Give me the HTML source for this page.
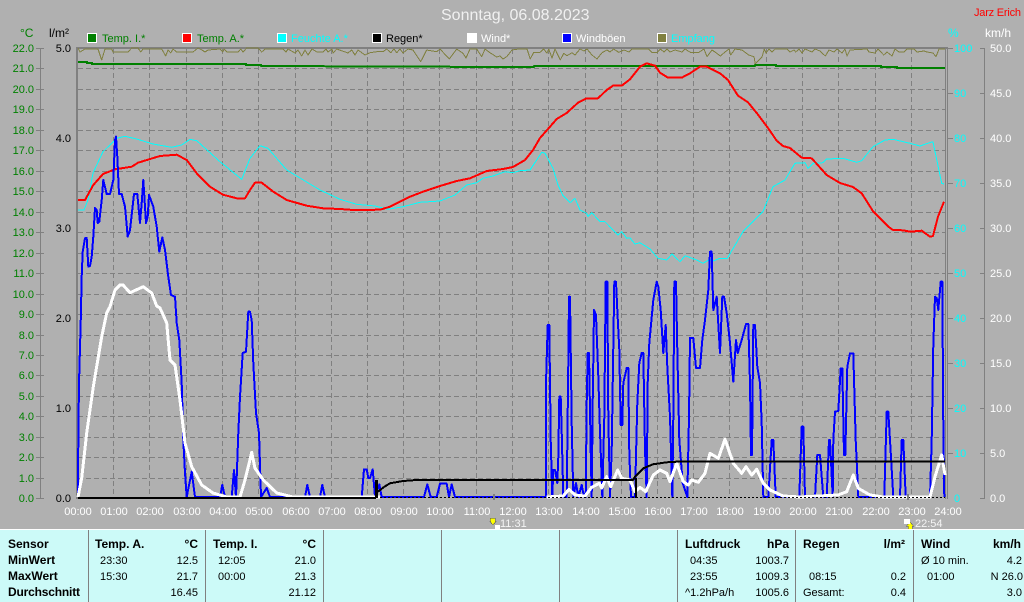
<!DOCTYPE html>
<html><head><meta charset="utf-8"><title>Sonntag, 06.08.2023</title>
<style>
html,body{margin:0;padding:0;background:#b0b0b0}
svg{display:block}
text{font-family:"Liberation Sans",sans-serif;font-size:11px}
.b{font-weight:bold;font-size:12px}
.g{fill:#008000}.w{fill:#fff}.c{fill:#0ff}.k{fill:#000}
.e{text-anchor:end}.m{text-anchor:middle}
polyline,path,line,rect{shape-rendering:crispEdges}
polyline{fill:none;stroke-linejoin:round}
</style></head><body>
<svg width="1024" height="602" viewBox="0 0 1024 602" xmlns="http://www.w3.org/2000/svg">
<rect width="1024" height="602" fill="#b0b0b0"/>
<text x="441" y="20" style="font-size:16px" fill="#f0f0f0">Sonntag, 06.08.2023</text>
<text x="974" y="16" fill="#f00" textLength="47">Jarz Erich</text>
<text x="20" y="37" class="g" style="font-size:12px">°C</text>
<text x="49" y="37" class="k" style="font-size:12px">l/m²</text>
<text x="948" y="37" class="c" style="font-size:12px">%</text>
<text x="985" y="37" class="w" style="font-size:12px">km/h</text>

<!-- legend -->
<g stroke="#fff" stroke-width="1">
<rect x="87.5" y="33.5" width="9" height="9" fill="#008000"/>
<rect x="182.5" y="33.5" width="9" height="9" fill="#f00"/>
<rect x="277.5" y="33.5" width="9" height="9" fill="#0ff"/>
<rect x="372.5" y="33.5" width="9" height="9" fill="#000"/>
<rect x="467.5" y="33.5" width="9" height="9" fill="#fff"/>
<rect x="562.5" y="33.5" width="9" height="9" fill="#00f"/>
<rect x="657.5" y="33.5" width="9" height="9" fill="#808040"/>
</g>
<text x="102" y="42" class="g">Temp. I.*</text>
<text x="197" y="42" class="g">Temp. A.*</text>
<text x="291" y="42" class="c">Feuchte A.*</text>
<text x="386" y="42" class="k">Regen*</text>
<text x="481" y="42" class="w">Wind*</text>
<text x="576" y="42" class="w">Windböen</text>
<text x="671" y="42" class="c">Empfang</text>

<!-- grid -->
<path stroke="#808080" stroke-width="1" stroke-dasharray="5 3" fill="none" d="M78 68.5H945M78 89.5H945M78 109.5H945M78 130.5H945M78 150.5H945M78 171.5H945M78 191.5H945M78 212.5H945M78 232.5H945M78 253.5H945M78 273.5H945M78 294.5H945M78 314.5H945M78 335.5H945M78 355.5H945M78 375.5H945M78 396.5H945M78 416.5H945M78 437.5H945M78 457.5H945M78 478.5H945"/>
<path stroke="#808080" stroke-width="1" stroke-dasharray="5 3" fill="none" d="M113.5 49V498M149.5 49V498M186.5 49V498M222.5 49V498M258.5 49V498M295.5 49V498M331.5 49V498M367.5 49V498M403.5 49V498M439.5 49V498M476.5 49V498M512.5 49V498M548.5 49V498M585.5 49V498M621.5 49V498M657.5 49V498M693.5 49V498M729.5 49V498M766.5 49V498M802.5 49V498M838.5 49V498M875.5 49V498M911.5 49V498"/>

<!-- frame -->
<rect x="76" y="47" width="872" height="2" fill="#808080"/>
<rect x="76" y="47" width="2" height="452" fill="#808080"/>
<rect x="945" y="47" width="1" height="452" fill="#808080"/>
<rect x="947" y="47" width="1" height="452" fill="#808080"/>

<!-- left axis -->
<path stroke="#808080" fill="none" d="M40.5 48V498M36 48.5H44M36 68.5H44M36 89.5H44M36 109.5H44M36 130.5H44M36 150.5H44M36 171.5H44M36 191.5H44M36 212.5H44M36 232.5H44M36 253.5H44M36 273.5H44M36 294.5H44M36 314.5H44M36 335.5H44M36 355.5H44M36 375.5H44M36 396.5H44M36 416.5H44M36 437.5H44M36 457.5H44M36 478.5H44M36 498.5H44"/>
<g class="e">
<text x="34" y="52" class="g e">22.0</text><text x="34" y="72" class="g e">21.0</text><text x="34" y="93" class="g e">20.0</text><text x="34" y="113" class="g e">19.0</text><text x="34" y="134" class="g e">18.0</text><text x="34" y="154" class="g e">17.0</text><text x="34" y="175" class="g e">16.0</text><text x="34" y="195" class="g e">15.0</text><text x="34" y="216" class="g e">14.0</text><text x="34" y="236" class="g e">13.0</text><text x="34" y="257" class="g e">12.0</text><text x="34" y="277" class="g e">11.0</text><text x="34" y="298" class="g e">10.0</text><text x="34" y="318" class="g e">9.0</text><text x="34" y="339" class="g e">8.0</text><text x="34" y="359" class="g e">7.0</text><text x="34" y="379" class="g e">6.0</text><text x="34" y="400" class="g e">5.0</text><text x="34" y="420" class="g e">4.0</text><text x="34" y="441" class="g e">3.0</text><text x="34" y="461" class="g e">2.0</text><text x="34" y="482" class="g e">1.0</text><text x="34" y="502" class="g e">0.0</text>
<text x="71" y="52" class="k e">5.0</text><text x="71" y="142" class="k e">4.0</text><text x="71" y="232" class="k e">3.0</text><text x="71" y="322" class="k e">2.0</text><text x="71" y="412" class="k e">1.0</text><text x="71" y="502" class="k e">0.0</text>
</g>

<!-- right axes -->
<path stroke="#808080" fill="none" d="M984.5 48V498M980 48.5H985M980 93.5H985M980 138.5H985M980 183.5H985M980 228.5H985M980 273.5H985M980 318.5H985M980 363.5H985M980 408.5H985M980 453.5H985M980 498.5H985M948 48.5H953M948 93.5H953M948 138.5H953M948 183.5H953M948 228.5H953M948 273.5H953M948 318.5H953M948 363.5H953M948 408.5H953M948 453.5H953"/>
<text x="954" y="52" class="c">100</text><text x="954" y="97" class="c">90</text><text x="954" y="142" class="c">80</text><text x="954" y="187" class="c">70</text><text x="954" y="232" class="c">60</text><text x="954" y="277" class="c">50</text><text x="954" y="322" class="c">40</text><text x="954" y="367" class="c">30</text><text x="954" y="412" class="c">20</text><text x="954" y="457" class="c">10</text><text x="954" y="502" class="c">0</text>
<text x="990" y="52" class="w">50.0</text><text x="990" y="97" class="w">45.0</text><text x="990" y="142" class="w">40.0</text><text x="990" y="187" class="w">35.0</text><text x="990" y="232" class="w">30.0</text><text x="990" y="277" class="w">25.0</text><text x="990" y="322" class="w">20.0</text><text x="990" y="367" class="w">15.0</text><text x="990" y="412" class="w">10.0</text><text x="990" y="457" class="w">5.0</text><text x="990" y="502" class="w">0.0</text>

<!-- olive -->
<polyline stroke="#808040" stroke-width="1" points="78,48 80,52 85,49 98,49 101.7,60 105,49 111.7,49 113,52 128,52 131.7,48 138,48 140.7,52 143,49 161.7,49 165.7,56 168,50 170.7,53 173,49 176.7,52 193,52 198,48 202,50 205,52 208,50 220,49 222.7,52 224,49 227,52 238,52 240.7,49 243,52 246.7,48 258,48 261.7,52 265,49 283,49 286,52 288,49 295,53 298,50 301.7,56 305,50 308,55 312,49 317,52 323,52 326,49 328,52 332,49 333,53 336.7,49 348,53 351.7,50 355,55 358,50 365,55 370,52.7 376.7,51.7 383,51.7 386.7,49 390.7,52.7 394,49 396.7,52.7 400,49 403,53 408,49 413,50 420.7,61.7 426.7,50 436.7,51.7 440,49 449.3,59 456.7,49 463,53.3 466,58 470,49 476.7,49 481.7,56.7 485,49 490,52.7 496.7,57 500,56 503,59 506.7,56.7 512,50 518.7,49 527,49 530.3,59 533.7,52.3 540,52.3 543.7,49 547,53.3 548.7,49 552,58 555,49 560.3,60 563.7,53.3 567,55.7 572,52.7 575,55 580,49 584,51 587,49 592,55 597,59 602,52.7 607,50 610,52 613.7,49 618.7,52.3 624,50 629,52 632,49 648.7,49 652,52.7 657,52.7 660.3,49 664,52 667,49 670,52 675,50 682,52 685,49 690.3,52.3 699,52.3 704,49 707,56.7 712,50 715,52 720.3,56 725,52 729,49 730.7,55 735,49 742,50 748.7,55 754,56.7 755.3,64 759,60 762,57 764.3,49 766,53 769,49 772,52 775.3,49 787,49 790,52 794,50 795.7,52 799,49 802,53 805,49 812,52 815,49 820,51 825.3,56 829,50 834,52 837,49 842,53 845,49 847,56 850,50 867,49 869,52 875,53 878,49 883.7,55 887,52 892,56 895,49 899,52 904,52 907,49 914,49 917,52 924,51 927,52 933,53 936,56.7 939,49 945,49"/>
<!-- green -->
<polyline stroke="#008000" stroke-width="2" stroke-linejoin="miter" points="78,62 87,62 87,63 92,63 92,64 246,64 246,65 261,65 261,66 512,67 534,67 534,66 755,66 755,65 776,65 776,66 881,66 881,67 897,67 897,68 945,68"/>
<!-- cyan -->
<polyline stroke="#0ff" stroke-width="1" points="78,210 84,210 88,200 93,173 103,151.7 116.7,138.3 125,136.3 136.7,139 153,144 171.7,147.3 181.7,145 190,139.3 196.7,140.7 220,161.7 241.7,179.3 250,158.3 260,145.7 268,148.3 286.7,170 320,190 340,199.3 356.7,204.3 375,206 380,207.3 388,209.3 403,206.7 420,202.3 440,201 455,195 466.7,185 476.7,182.7 483,178.3 493,176 505,171.7 513,172.7 520,170.7 530,170 536.7,160 541.7,152.3 545,153.3 553,168.3 558,185 563,195.7 570,202.7 575,198.3 580,210 586.7,213.3 588,216.7 591.7,212.7 600,221.7 605,221.7 618,235 621.7,231.7 626.7,238.3 630,238 635,244 640,242.7 650,249 658,258.3 666.7,260 672,254 680,261.7 685,255.7 696.7,260 703,263.3 710,259.3 713,261 720,258.3 727.3,258.3 743,231.7 763,211.7 773,186.7 785,180 795,163.3 805,162.7 808,168.3 813,163.3 823,162.7 826.7,159 843,158.3 856.7,162.3 861.7,160.7 873,146.7 885,140 893,139.3 910,143.3 920,146 931.7,142 933,142 941.7,183.3 944,184"/>
<!-- red -->
<polyline stroke="#f00" stroke-width="2" points="78,200 85,200 93.3,185 103,174 115,169.3 131.7,166.7 138,162.7 160,156 176.7,154.7 186.7,160 196.7,173.3 210,186.7 223,194.7 236.7,198.3 245,198.3 250,190 255,182.7 261.7,182.7 273.3,191.7 286.7,200 306.7,205.7 323,208.3 340,209 353,210 380,209.7 390,206.7 398,202.7 410,196.7 423,191.7 440,186 456.7,181 470,178.3 486.7,171 503,169 513,167 525,160 533,150 540,138 550,126.7 556.7,119 566.7,113 578,102.7 586.7,98.3 598,98.3 606.7,90 613,85.7 621.7,85.7 630,79.3 640,66.7 646.7,63.3 655,65.7 660,72.7 668,77.7 681.7,77.7 690,73.3 700,66.7 706.7,66.7 720,73.3 728,80 738,95.7 748,102.3 756.7,113 768,128 776.7,140.7 783,146 790,148 801.7,157.7 811.7,158.3 826.7,175 840,183 853,187 861.7,193.3 873.3,211.7 888.3,226.7 893,230 903,230.3 910,231.7 921.7,230.7 930,236.7 933,236 938,216.7 944,201.7"/>
<!-- blue -->
<polyline stroke="#00f" stroke-width="2" points="78,497 78.3,440 79,383 80.7,323 81.7,276.7 82.7,251.7 85,238.3 86.7,238 88.3,266.7 90,266 91.7,256.7 93.3,236.7 95,208 96.7,210 97.7,223 99.3,221.7 101.7,200 103.3,180 106.7,194 110,194 113.3,180 115,140 116,136.7 117.3,156.7 119,194 121.7,194 125,206.7 127.7,236.7 130,230 134,194 137.3,194 140,223 141.7,203 143.3,180 146,223 147.7,216.7 149,195 153.3,206.7 156.7,226.7 159.3,251.7 162.3,237.3 165,250 168.3,276.7 171,295 175,296.7 176.7,323 179.3,340 181.7,383 183.3,440 185,473 186.7,497 191.7,471.7 195,497 220,497 222.3,485 225,497 231.7,497 234,470 236,497 238.3,433 240,396.7 242.7,353 246,351.7 248.3,311.7 250,311.7 251.7,320 253.3,363 256,413 259,433 261,497 266.7,488 270,497 305,497 307.3,485 310,497 320,497 322.3,485 325,497 361.7,497 364,469.3 366.7,469.3 368.3,478 370,478 372.7,469.3 375,497 379.3,484.3 381.7,497 424,497 427.3,484.3 430.7,497 436.7,497 440,483.7 446.7,483.7 449,497 451.7,484.3 455,497 546,497 546,383 547.7,325 549.3,325 550.7,440 552.3,497 553.3,470 555,470 557.3,483 558.3,456.7 559.3,396.7 560.7,396.7 561.7,431.7 563.3,497 566.7,497 568.3,363 569,296.7 570,296.7 571.7,423 573.3,497 576,483 578.3,497 581.7,485 584,497 585.7,497 586.7,403 587.7,353 589,353 590.7,450 591.7,497 592.7,403 594,310 596,315 598.3,376.7 600,431.7 602.3,497 604.3,416.7 605.7,281.7 607.3,281.7 608.3,416.7 610,497 611.7,450 614.3,281.7 616,281.7 617.3,310 619.3,350 620.7,425 622.3,425 623.3,383 626.7,368 628.3,368 629.3,453 631,497 635,497 637.3,403 639.3,363 641.7,353 643.3,353 645,450 646.7,497 647.7,383 649.3,343 653.3,300 656.7,281.7 658.3,286.7 660.7,310 663.3,353 665.7,325 667.3,366.7 670,416.7 672.3,497 673.3,416.7 674.3,281.7 676,281.7 677.3,350 679.3,440 682.7,483 687.3,497 689,416.7 690,338 693.3,338 696,368 700,368 702.3,340 705,320 708.3,290 710,251.7 711.7,251.7 713.3,310 716.7,296.7 720,353 722.3,296.7 724,296.7 726.7,313 730,343 733.3,381.7 736,340 737.7,353 741.7,340 746,324 748.3,324 750,383 751,455 752,455 753.3,325 755,325 757.3,366.7 760,383 761.7,423 763.3,497 768.3,497 771.7,440 773.3,440 775.7,497 799.3,497 801.7,426.7 803.3,426.7 805,497 815,497 817.3,455 820,455 823.3,497 826.7,497 829,440 830,440 832.7,497 833.3,440 835,411.7 838.3,411 840.7,368.3 842.3,368.3 844,455 845.3,455 847.3,366.7 850,353.3 853.3,353.3 855.7,440 858.3,497 884.3,497 886.7,411.7 888.3,411.7 890,440 893.3,497 900,497 901.7,440 903.3,440 905.7,497 930,497 931.7,440 933.3,345 935,296.7 936.7,298 938.3,310 940.7,281.7 942.3,281.7 943.3,426.7 944.3,497"/>
<!-- white -->
<polyline stroke="#fff" stroke-width="3" points="78,497 81.7,478 86.7,433 93.3,386.7 101.7,336.7 106.7,313 110,306.7 115,290 120,285 123,285 130,292.7 143.3,286.7 151.7,293 156.7,306 160,308 166.7,323 170,360 175,365 180,400 185,443 191.7,466.7 201.7,485 213,493 226.7,497 240,497 245,480 248.3,466.7 251.7,452.3 255,468.3 263.3,480 276.7,493 293,497 310,497 380,497"/>
<polyline stroke="#fff" stroke-width="3" points="546.7,497 563.3,496 569,489.3 575,495 585,496 591.7,487.3 599.3,483.3 601.7,488 606.7,476.7 610.7,486.7 617.7,470 621.7,478.3 630,480 635,491.7 640,487.3 645.7,491.7 653.3,475 660,470 666.7,473.3 670,481.7 676.7,463.3 683.3,481.7 688.3,485 691.7,480 698.3,482.3 705,473.3 710,453.3 718.3,458.3 725,439.3 733.3,463.3 741.7,473.3 746,466.7 751.7,475 756.7,469.3 763.3,483.3 770,490 783,496 800,497 838,495 846.7,491.7 853.3,475 858.3,488.3 870,495 883,497 930,497 935,476.7 941.7,455 945,475"/>
<!-- black rain -->
<rect x="78" y="497" width="298" height="2" fill="#000"/>
<line x1="380" y1="497.5" x2="945" y2="497.5" stroke="#000" stroke-dasharray="2 2"/>
<rect x="375" y="480" width="3" height="18" fill="#000"/>
<polyline stroke="#000" stroke-width="2" points="378,491.7 384,487 390,483.3 403,481 416.7,480 520,480 633,480 635,476.7 643.3,468.3 653,464.3 666.7,462.3 676.7,461.7 945,461.7"/>
<rect x="635" y="478" width="2" height="20" fill="#000"/>

<!-- x labels -->
<path fill="#808080" d="M493 494h2v6h-2zM907 494h2v6h-2z"/>
<text x="78" y="515" class="w m">00:00</text><text x="114" y="515" class="w m">01:00</text><text x="150" y="515" class="w m">02:00</text><text x="187" y="515" class="w m">03:00</text><text x="223" y="515" class="w m">04:00</text><text x="259" y="515" class="w m">05:00</text><text x="296" y="515" class="w m">06:00</text><text x="332" y="515" class="w m">07:00</text><text x="368" y="515" class="w m">08:00</text><text x="404" y="515" class="w m">09:00</text><text x="440" y="515" class="w m">10:00</text><text x="477" y="515" class="w m">11:00</text><text x="513" y="515" class="w m">12:00</text><text x="549" y="515" class="w m">13:00</text><text x="586" y="515" class="w m">14:00</text><text x="622" y="515" class="w m">15:00</text><text x="658" y="515" class="w m">16:00</text><text x="694" y="515" class="w m">17:00</text><text x="730" y="515" class="w m">18:00</text><text x="767" y="515" class="w m">19:00</text><text x="803" y="515" class="w m">20:00</text><text x="839" y="515" class="w m">21:00</text><text x="876" y="515" class="w m">22:00</text><text x="912" y="515" class="w m">23:00</text><text x="948" y="515" class="w m">24:00</text>

<!-- sun marks -->
<path fill="#ff0" stroke="#555" stroke-width=".5" d="M490 518h5v3h1.500l-3.500 4l-3.500-4h1z"/>
<rect x="495" y="525" width="5" height="4" fill="#fff"/>
<text x="500" y="527" fill="#f4f4f4">11:31</text>
<path fill="#ff0" stroke="#555" stroke-width=".5" d="M910 522l3.500 4h-1.500v3h-4v-3h-1.500z"/>
<rect x="904" y="519" width="6" height="5" fill="#fff"/>
<text x="915" y="527" fill="#f4f4f4">22:54</text>

<!-- table -->
<rect x="0" y="529" width="1024" height="73" fill="#ccfaf8"/>
<rect x="0" y="529" width="1024" height="1" fill="#fff"/>
<path stroke="#808080" fill="none" d="M88.500 530V602M205.500 530V602M323.500 530V602M441.500 530V602M559.500 530V602M677.500 530V602M795.500 530V602M913.500 530V602"/>

<text x="8" y="548" class="b k">Sensor</text>
<text x="8" y="564" class="b k">MinWert</text>
<text x="8" y="580" class="b k">MaxWert</text>
<text x="8" y="596" class="b k" textLength="72">Durchschnitt</text>

<text x="95" y="548" class="b k">Temp. A.</text><text x="198" y="548" class="b k e">°C</text>
<text x="100" y="564" class="k">23:30</text><text x="198" y="564" class="k e">12.5</text>
<text x="100" y="580" class="k">15:30</text><text x="198" y="580" class="k e">21.7</text>
<text x="198" y="596" class="k e">16.45</text>

<text x="213" y="548" class="b k">Temp. I.</text><text x="316" y="548" class="b k e">°C</text>
<text x="218" y="564" class="k">12:05</text><text x="316" y="564" class="k e">21.0</text>
<text x="218" y="580" class="k">00:00</text><text x="316" y="580" class="k e">21.3</text>
<text x="316" y="596" class="k e">21.12</text>

<text x="685" y="548" class="b k">Luftdruck</text><text x="789" y="548" class="b k e">hPa</text>
<text x="690" y="564" class="k">04:35</text><text x="789" y="564" class="k e">1003.7</text>
<text x="690" y="580" class="k">23:55</text><text x="789" y="580" class="k e">1009.3</text>
<text x="685" y="596" class="k">^1.2hPa/h</text><text x="789" y="596" class="k e">1005.6</text>

<text x="803" y="548" class="b k">Regen</text><text x="905" y="548" class="b k e">l/m²</text>
<text x="809" y="580" class="k">08:15</text><text x="906" y="580" class="k e">0.2</text>
<text x="803" y="596" class="k">Gesamt:</text><text x="906" y="596" class="k e">0.4</text>

<text x="921" y="548" class="b k">Wind</text><text x="1021" y="548" class="b k e">km/h</text>
<text x="921" y="564" class="k">Ø 10 min.</text><text x="1022" y="564" class="k e">4.2</text>
<text x="927" y="580" class="k">01:00</text><text x="1023" y="580" class="k e">N 26.0</text>
<text x="1022" y="596" class="k e">3.0</text>
</svg>
</body></html>
